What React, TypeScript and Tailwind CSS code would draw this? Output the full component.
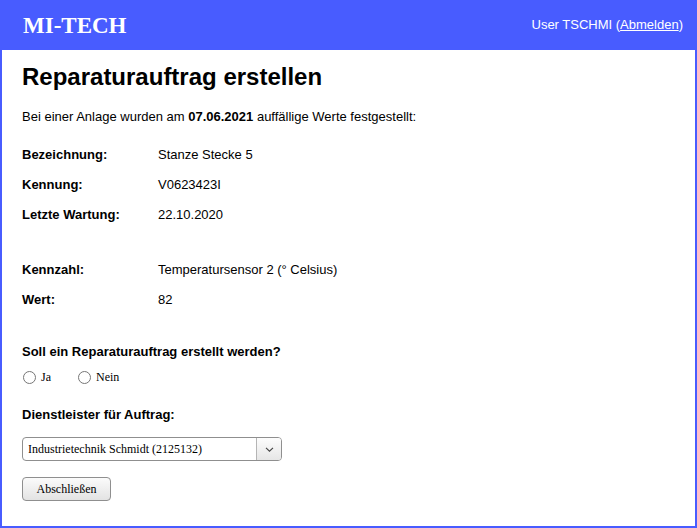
import React, { useState } from "react";

export default function App() {
  const [choice, setChoice] = useState<string>("");

  const rowsTop = [
    { label: "Bezeichnung:", value: "Stanze Stecke 5" },
    { label: "Kennung:", value: "V0623423I" },
    { label: "Letzte Wartung:", value: "22.10.2020" },
  ];
  const rowsBottom = [
    { label: "Kennzahl:", value: "Temperatursensor 2 (° Celsius)" },
    { label: "Wert:", value: "82" },
  ];

  return (
    <div className="w-[697px] h-[528px] flex flex-col bg-white font-['Liberation_Sans',Arial,sans-serif] text-[13px] text-black">
      {/* Header */}
      <div className="h-[50px] shrink-0 bg-[#485cff] flex items-center justify-between pl-[23px] pr-[14px] text-white">
        <span className="font-['Liberation_Serif','Times_New_Roman',serif] font-bold text-[23px] leading-none">
          MI-TECH
        </span>
        <span className="text-[13px]">
          User TSCHMI (<a className="underline cursor-pointer">Abmelden</a>)
        </span>
      </div>

      {/* Content */}
      <div className="flex-1 border-l-2 border-r-2 border-b-2 border-[#485cff] pl-[20px]">
        <h1 className="mt-[13px] text-[24px] leading-[28px] font-bold">Reparaturauftrag erstellen</h1>
        <p className="mt-[16px] leading-[20px]">
          Bei einer Anlage wurden am <b>07.06.2021</b> auffällige Werte festgestellt:
        </p>

        <div className="mt-[13px]">
          {rowsTop.map((r) => (
            <div key={r.label} className="h-[30px] flex items-center">
              <span className="w-[136px] font-bold">{r.label}</span>
              <span>{r.value}</span>
            </div>
          ))}
        </div>

        <div className="mt-[25px]">
          {rowsBottom.map((r) => (
            <div key={r.label} className="h-[30px] flex items-center">
              <span className="w-[136px] font-bold">{r.label}</span>
              <span>{r.value}</span>
            </div>
          ))}
        </div>

        <div className="mt-[27px] leading-[20px] font-bold">Soll ein Reparaturauftrag erstellt werden?</div>
        <div className="mt-[5px] h-[20px] flex items-center font-['Liberation_Serif','Times_New_Roman',serif] text-[12px]">
          {["Ja", "Nein"].map((opt) => (
            <label key={opt} className="flex items-center mr-[26px] cursor-pointer">
              <input
                type="radio"
                name="auftrag"
                checked={choice === opt}
                onChange={() => setChoice(opt)}
                className="m-0 ml-[1px] w-[13px] h-[13px]"
              />
              <span className="ml-[5px]">{opt}</span>
            </label>
          ))}
        </div>

        <div className="mt-[18px] leading-[20px] font-bold">Dienstleister für Auftrag:</div>

        <div className="mt-[12px] w-[260px] h-[24px] flex border border-[#8f8f8f] rounded-[4px] bg-white font-['Liberation_Serif','Times_New_Roman',serif] text-[12px] overflow-hidden">
          <div className="flex-1 flex items-center pl-[5px]">Industrietechnik Schmidt (2125132)</div>
          <div className="w-[25px] border-l border-[#b5b5b5] bg-gradient-to-b from-[#fdfdfd] to-[#e6e6e6] flex items-center justify-center">
            <svg width="9" height="5" viewBox="0 0 9 5" fill="none">
              <path d="M1 0.8l3.5 3.4 3.5-3.4" stroke="#444" strokeWidth="1.1" />
            </svg>
          </div>
        </div>

        <button className="mt-[16px] w-[89px] h-[24px] border border-[#8f8f8f] rounded-[4px] bg-gradient-to-b from-[#fbfbfb] to-[#e3e3e3] font-['Liberation_Serif','Times_New_Roman',serif] text-[12px] flex items-center justify-center">
          Abschließen
        </button>
      </div>
    </div>
  );
}
